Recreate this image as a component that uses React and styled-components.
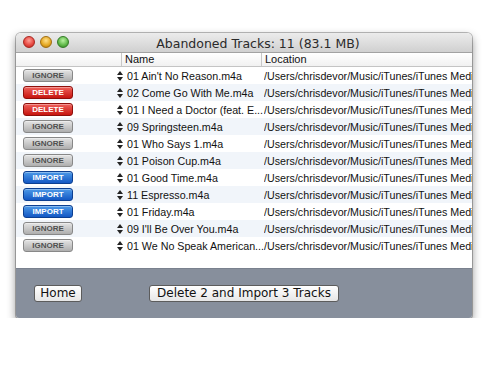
import React from "react";
import styled, { createGlobalStyle } from "styled-components";

const GlobalStyle = createGlobalStyle`
  body {
    margin: 0;
    background: #ffffff;
    font-family: "Liberation Sans", "DejaVu Sans", sans-serif;
  }
`;

const tracks = [
  { action: "ignore", name: "01 Ain't No Reason.m4a" },
  { action: "delete", name: "02 Come Go With Me.m4a" },
  { action: "delete", name: "01 I Need a Doctor (feat. E..." },
  { action: "ignore", name: "09 Springsteen.m4a" },
  { action: "ignore", name: "01 Who Says 1.m4a" },
  { action: "ignore", name: "01 Poison Cup.m4a" },
  { action: "import", name: "01 Good Time.m4a" },
  { action: "import", name: "11 Espresso.m4a" },
  { action: "import", name: "01 Friday.m4a" },
  { action: "ignore", name: "09 I'll Be Over You.m4a" },
  { action: "ignore", name: "01 We No Speak American..." },
];

const Page = styled.div`
  padding: 33px 0 0 16px;
`;

const Window = styled.div`
  width: 456px;
  height: 285px;
  display: flex;
  flex-direction: column;
  border-radius: 5px 5px 3px 3px;
  overflow: hidden;
  box-shadow: 0 4px 10px rgba(0, 0, 0, 0.45), 0 0 0 1px rgba(0, 0, 0, 0.25);
  background: #fff;
`;

const TitleBar = styled.div`
  height: 20px;
  flex: none;
  display: flex;
  align-items: center;
  position: relative;
  background: linear-gradient(#ececec, #d0d0d0);
  border-bottom: 1px solid #a2a2a2;
  box-sizing: border-box;
`;

const Lights = styled.div`
  display: flex;
  gap: 5px;
  padding-left: 7px;
  position: absolute;
  left: 0;
  top: 3px;
`;

const Light = styled.span`
  width: 12px;
  height: 12px;
  border-radius: 50%;
  box-sizing: border-box;
  border: 1px solid ${(p) => p.$ring};
  background: radial-gradient(circle at 50% 35%, ${(p) => p.$hi} 0%, ${(p) => p.$c} 60%, ${(p) => p.$ring} 100%);
`;

const Title = styled.div`
  flex: 1;
  text-align: center;
  font-family: "DejaVu Sans", sans-serif;
  font-size: 12.5px;
  color: #2a2a2a;
  padding: 1px 0 0 28px;
`;

const Header = styled.div`
  height: 14px;
  flex: none;
  display: grid;
  grid-template-columns: 105px 140px 1fr;
  background: linear-gradient(#ffffff, #f1f1f1);
  border-bottom: 1px solid #c4c4c4;
  box-sizing: border-box;
  font-size: 11px;
  color: #111;
`;

const HeadCell = styled.div`
  border-left: ${(p) => (p.$sep ? "1px solid #c8c8c8" : "none")};
  padding-left: 3px;
  line-height: 13px;
  white-space: nowrap;
  overflow: hidden;
`;

const List = styled.div`
  flex: 1;
  background: #fff;
`;

const Row = styled.div`
  height: 17px;
  display: grid;
  grid-template-columns: 97px 14px 137px 1fr;
  align-items: center;
  background: ${(p) => (p.$alt ? "#f1f5fa" : "#ffffff")};
  font-size: 10.7px;
  color: #111;
`;

const ActionCell = styled.div`
  padding-left: 7px;
  display: flex;
`;

const palette = {
  ignore: { top: "#e4e4e4", bot: "#aeaeae", border: "#888888", color: "#505050" },
  delete: { top: "#f0625c", bot: "#c6150f", border: "#8e0f0b", color: "#fff" },
  import: { top: "#4d9ae8", bot: "#1458c4", border: "#0c3f91", color: "#fff" },
};

const ActionButton = styled.div`
  width: 50px;
  height: 13px;
  box-sizing: border-box;
  border-radius: 3px;
  border: 1px solid ${(p) => palette[p.$kind].border};
  background: linear-gradient(${(p) => palette[p.$kind].top}, ${(p) => palette[p.$kind].bot});
  color: ${(p) => palette[p.$kind].color};
  font-family: "Liberation Sans", sans-serif;
  font-size: 8px;
  font-weight: bold;
  text-align: center;
  line-height: 11px;
  box-shadow: inset 0 1px 0 rgba(255, 255, 255, 0.35);
`;

const Arrows = styled.div`
  display: flex;
  align-items: center;
  justify-content: center;
`;

const Cell = styled.div`
  white-space: nowrap;
  overflow: hidden;
`;

const Footer = styled.div`
  height: 50px;
  flex: none;
  background: #878f9c;
  border-top: 1px solid #7a818e;
  box-sizing: border-box;
  display: flex;
  align-items: flex-start;
  padding: 16px 0 0 18px;
`;

const PushButton = styled.button`
  height: 17px;
  width: ${(p) => p.$w}px;
  margin-left: ${(p) => p.$ml || 0}px;
  padding: 0;
  border: 1px solid #5c5c5c;
  border-radius: 3px;
  background: linear-gradient(#ffffff, #e6e6e6);
  font-family: "DejaVu Sans", "Liberation Sans", sans-serif;
  font-size: 12px;
  color: #111;
  line-height: 15px;
`;

function SortArrows() {
  return (
    <svg width="6" height="10" viewBox="0 0 6 10">
      <path d="M3 0 L6 4 L0 4 Z" fill="#222" />
      <path d="M3 10 L6 6 L0 6 Z" fill="#222" />
    </svg>
  );
}

export default function App() {
  return (
    <Page>
      <GlobalStyle />
      <Window>
        <TitleBar>
          <Lights>
            <Light $c="#e5463f" $hi="#ff9f96" $ring="#a8261f" />
            <Light $c="#e3a620" $hi="#ffe08a" $ring="#a06d10" />
            <Light $c="#5cb646" $hi="#b8f2a0" $ring="#327a25" />
          </Lights>
          <Title>Abandoned Tracks: 11 (83.1 MB)</Title>
        </TitleBar>
        <Header>
          <HeadCell />
          <HeadCell $sep>Name</HeadCell>
          <HeadCell $sep>Location</HeadCell>
        </Header>
        <List>
          {tracks.map((t, i) => (
            <Row key={i} $alt={i % 2 === 1}>
              <ActionCell>
                <ActionButton $kind={t.action}>{t.action.toUpperCase()}</ActionButton>
              </ActionCell>
              <Arrows>
                <SortArrows />
              </Arrows>
              <Cell>{t.name}</Cell>
              <Cell>/Users/chrisdevor/Music/iTunes/iTunes Media</Cell>
            </Row>
          ))}
        </List>
        <Footer>
          <PushButton $w={48}>Home</PushButton>
          <PushButton $w={190} $ml={67}>Delete 2 and Import 3 Tracks</PushButton>
        </Footer>
      </Window>
    </Page>
  );
}
